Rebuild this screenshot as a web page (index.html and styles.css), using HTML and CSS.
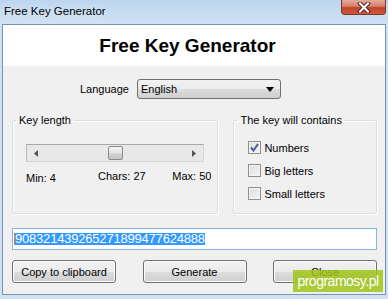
FILE: index.html
```html
<!DOCTYPE html>
<html lang="en">
<head>
    <meta charset="UTF-8">
    <title>Free Key Generator</title>
    <link rel="stylesheet" href="styles.css">
</head>
<body>
    <div class="window">
        <div class="titlebar">
            <span class="title-text">Free Key Generator</span>
            <div class="close-box">
                <svg width="16" height="11" viewBox="0 0 16 11">
                    <path d="M4 1.5 L12 9.5 M12 1.5 L4 9.5" stroke="#5a2a20" stroke-width="4" stroke-linecap="square"/>
                    <path d="M4 1.5 L12 9.5 M12 1.5 L4 9.5" stroke="#ffffff" stroke-width="2" stroke-linecap="square"/>
                </svg>
            </div>
        </div>

        <div class="client">
            <div class="header">Free Key Generator</div>

            <div class="language-row">
                <span class="label">Language</span>
                <div class="select">
                    <span>English</span>
                    <svg width="8" height="5" viewBox="0 0 8 5"><path d="M0 0 L8 0 L4 5 Z" fill="#000"/></svg>
                </div>
            </div>

            <div class="groups">
                <fieldset class="group group-length">
                    <legend>Key length</legend>
                    <div class="slider">
                        <svg class="arrow-left" width="4" height="7" viewBox="0 0 4 7"><path d="M4 0 L0 3.5 L4 7 Z" fill="#555"/></svg>
                        <div class="thumb"></div>
                        <svg class="arrow-right" width="4" height="7" viewBox="0 0 4 7"><path d="M0 0 L4 3.5 L0 7 Z" fill="#555"/></svg>
                    </div>
                    <div class="slider-labels">
                        <span class="min">Min: 4</span>
                        <span class="chars">Chars: 27</span>
                        <span class="max">Max: 50</span>
                    </div>
                </fieldset>

                <fieldset class="group group-contains">
                    <legend>The key will contains</legend>
                    <label class="check">
                        <span class="box checked">
                            <svg width="9" height="9" viewBox="0 0 9 9"><path d="M1 4.5 L3.5 7.5 L8 1" fill="none" stroke="#4b5f95" stroke-width="2"/></svg>
                        </span>
                        Numbers
                    </label>
                    <label class="check"><span class="box"></span>Big letters</label>
                    <label class="check"><span class="box"></span>Small letters</label>
                </fieldset>
            </div>

            <div class="key-field">
                <span class="caret"></span><span class="selected">908321439265271899477624888</span>
            </div>

            <div class="button-row">
                <button class="btn">Copy to clipboard</button>
                <button class="btn">Generate</button>
                <button class="btn">Close</button>
            </div>
        </div>

        <div class="watermark">programosy.pl</div>
    </div>
</body>
</html>
```

FILE: styles.css
```css
body {
    margin: 0;
    padding: 0;
    font-family: "Liberation Sans", Arial, sans-serif;
    font-size: 11px;
    color: #000;
}
.window {
    position: relative;
    width: 388px;
    height: 299px;
    background: linear-gradient(#bdd5ee 0px, #cfe1f4 24px, #cfe1f4 100%);
    overflow: hidden;
}
.titlebar {
    position: relative;
    height: 24px;
}
.title-text {
    position: absolute;
    left: 4px;
    top: 4px;
    font-size: 11.5px;
    line-height: 14px;
    text-shadow: 0 0 6px #e8f2fc;
}
.close-box {
    position: absolute;
    right: 2px;
    top: 0;
    width: 45px;
    height: 15px;
    border: 1px solid #7a3528;
    border-top: none;
    border-radius: 0 0 4px 4px;
    background: linear-gradient(#e5aa9c 0%, #d8806b 45%, #c2432a 55%, #d2583c 100%);
    display: flex;
    align-items: center;
    justify-content: center;
    box-sizing: border-box;
}
.client {
    margin: 0 2px;
    height: 269px;
    border: 1px solid #7b92ab;
    background: #f0f0f0;
}
.header {
    height: 41px;
    background: #fff;
    font-size: 19px;
    font-weight: bold;
    line-height: 41px;
    text-align: center;
    padding-right: 13px;
}
.language-row {
    display: flex;
    align-items: center;
    gap: 8px;
    margin-top: 13px;
    padding-left: 77px;
    height: 20px;
}
.label {
    font-size: 11px;
}
.select {
    width: 144px;
    height: 20px;
    box-sizing: border-box;
    border: 1px solid #707070;
    border-radius: 3px;
    background: linear-gradient(#f2f2f2 0%, #ebebeb 50%, #dddddd 51%, #cfcfcf 100%);
    display: flex;
    align-items: center;
    justify-content: space-between;
    padding: 0 6px 0 3px;
}
.groups {
    display: flex;
    gap: 15px;
    margin-top: 15px;
    padding: 0 8px 0 9px;
}
.group {
    margin: 0;
    border: 1px solid #d5dfe5;
    border-radius: 3px;
    box-shadow: inset 1px 1px 0 #fff, 1px 1px 0 #fff;
    padding: 0;
    height: 100px;
    box-sizing: border-box;
}
.group legend {
    padding: 0 3px;
    margin-left: 3px;
    line-height: 13px;
}
.group-length {
    width: 207px;
}
.group-contains {
    width: 144px;
}
.slider {
    position: relative;
    margin: 17px 13px 0 13px;
    height: 18px;
    box-sizing: border-box;
    border: 1px solid #d6d6d6;
    border-top-color: #a8a8a8;
    border-left-color: #b8b8b8;
    background: #e8e8e8;
}
.arrow-left {
    position: absolute;
    left: 7px;
    top: 5px;
}
.arrow-right {
    position: absolute;
    right: 7px;
    top: 5px;
}
.thumb {
    position: absolute;
    left: 81px;
    top: 1px;
    width: 15px;
    height: 14px;
    box-sizing: border-box;
    border: 1px solid #8a8a8a;
    border-radius: 2px;
    background: linear-gradient(#f4f4f4 0%, #e6e6e6 50%, #d4d4d4 51%, #c6c6c6 100%);
}
.slider-labels {
    position: relative;
    height: 20px;
    margin: 0 6px 0 13px;
}
.slider-labels span {
    position: absolute;
}
.min {
    left: 0;
    top: 10px;
}
.chars {
    left: 72px;
    top: 8px;
}
.max {
    right: 0;
    top: 8px;
}
.check {
    display: flex;
    align-items: center;
    gap: 3px;
    margin-left: 14px;
    height: 13px;
    margin-top: 10px;
}
.check:first-of-type {
    margin-top: 14px;
}
.box {
    width: 13px;
    height: 13px;
    box-sizing: border-box;
    border: 1px solid #8f8f8f;
    background: linear-gradient(135deg, #dcdcdc, #f6f6f6);
    box-shadow: inset 0 0 0 1px #f4f4f4;
    display: flex;
    align-items: center;
    justify-content: center;
}
.key-field {
    display: flex;
    align-items: center;
    margin: 14px 0 0 9px;
    width: 365px;
    height: 22px;
    box-sizing: border-box;
    border: 1px solid #84b5e4;
    background: #fff;
    padding-left: 1px;
}
.caret {
    width: 1px;
    height: 12px;
    background: #e37b1b;
}
.selected {
    background: #3399ff;
    color: #fff;
    font-size: 13px;
    letter-spacing: -0.2px;
    line-height: 12px;
    height: 12px;
}
.button-row {
    display: flex;
    justify-content: space-between;
    margin: 10px 8px 0 9px;
}
.btn {
    width: 104px;
    height: 23px;
    box-sizing: border-box;
    border: 1px solid #707070;
    border-radius: 3px;
    background: linear-gradient(#f2f2f2 0%, #ebebeb 50%, #dddddd 51%, #cfcfcf 100%);
    box-shadow: inset 0 0 0 1px #fcfcfc;
    font-family: "Liberation Sans", Arial, sans-serif;
    font-size: 11px;
    color: #000;
    padding: 0;
}
.watermark {
    position: absolute;
    left: 293px;
    top: 270px;
    width: 90px;
    height: 22px;
    background: rgba(160, 196, 24, 0.85);
    color: #fff;
    font-size: 14px;
    letter-spacing: -0.5px;
    line-height: 22px;
    text-align: center;
}
```
